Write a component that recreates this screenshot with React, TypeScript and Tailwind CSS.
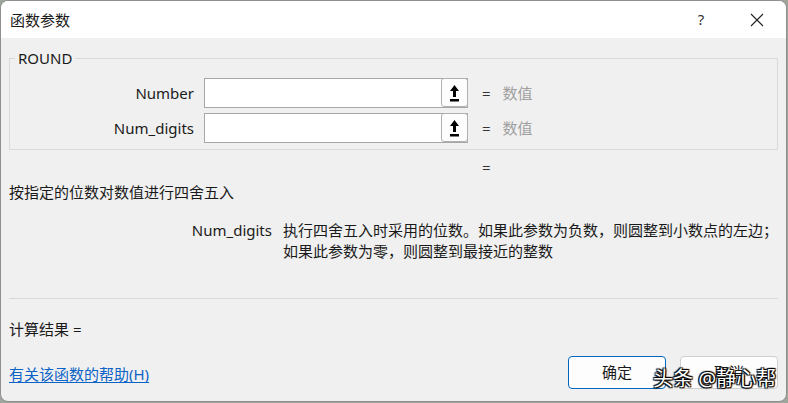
export default function App() {
  const font = { fontFamily: "'Noto Sans', 'Noto Sans CJK SC', sans-serif" };

  const UploadIcon = () => (
    <svg width="11" height="20" viewBox="0 0 11 20">
      <path d="M5.5 2 L10 8 L7 8 L7 14 L4 14 L4 8 L1 8 Z" fill="#000" />
      <rect x="1" y="16" width="9" height="2.5" fill="#000" />
    </svg>
  );

  const ParamRow = ({ label }: { label: string }) => (
    <div className="flex items-center h-[30px]">
      <div className="w-[184px] text-right text-[15px] text-[#1a1a1a]">{label}</div>
      <div className="ml-[10px] w-[264px] h-[30px] bg-white border border-[#a6a6a6] flex justify-end">
        <div className="w-[27px] h-[29px] -mt-px -mr-px rounded-[3px] border border-[#b0b0b0] bg-[#fdfdfd] flex items-center justify-center">
          <UploadIcon />
        </div>
      </div>
      <span className="ml-[14px] text-[15px] text-[#333]">=</span>
      <span className="ml-[12px] text-[15px] text-[#a0a0a0]">数值</span>
    </div>
  );

  return (
    <div className="w-[788px] h-[403px] bg-[#9ea59b] relative overflow-hidden" style={font}>
      <div className="absolute left-0 top-[50px] w-[2px] h-[135px] bg-[#c07a45]" />
      <div className="w-[787px] h-[402px] rounded-[8px] border border-[#8f8f8f] overflow-hidden flex flex-col bg-[#f0f0f0] relative">
        {/* Title bar */}
        <div className="h-[37px] bg-white flex items-center shrink-0">
          <div className="ml-[9px] text-[15px] text-[#1a1a1a] leading-[20px]">函数参数</div>
          <div className="ml-auto flex items-center">
            <div className="w-[46px] text-center text-[15px] text-[#333]">?</div>
            <div className="w-[46px] ml-[10px] mr-[6px] flex justify-center">
              <svg width="14" height="14" viewBox="0 0 14 14">
                <path d="M1 1 L13 13 M13 1 L1 13" stroke="#222" strokeWidth="1.1" />
              </svg>
            </div>
          </div>
        </div>

        {/* Body */}
        <div className="flex-1 px-[8px] flex flex-col">
          <fieldset className="mt-[10px] w-[769px] border border-[#d9d9d9] px-0 pb-[6px]">
            <legend className="ml-[5px] px-[3px] text-[15px] leading-[20px] text-[#1a1a1a]">ROUND</legend>
            <div className="mt-[10px] flex flex-col gap-[5px]">
              <ParamRow label="Number" />
              <ParamRow label="Num_digits" />
            </div>
          </fieldset>

          <div className="mt-[7px] h-[20px] leading-[20px] pl-[473px] text-[15px] text-[#333]">=</div>

          <div className="mt-[5px] h-[20px] leading-[20px] text-[15px] text-[#1a1a1a]">
            按指定的位数对数值进行四舍五入
          </div>

          <div className="mt-[18px] flex text-[15px] leading-[21px] text-[#1a1a1a] whitespace-nowrap">
            <div className="w-[264px] text-right">Num_digits</div>
            <div className="ml-[11px]">
              执行四舍五入时采用的位数。如果此参数为负数，则圆整到小数点的左边；
              <br />
              如果此参数为零，则圆整到最接近的整数
            </div>
          </div>

          <div className="mt-[36px] w-[769px] h-px bg-[#d9d9d9]" />

          <div className="mt-[20px] h-[20px] leading-[20px] text-[15px] text-[#1a1a1a]">计算结果 =</div>

          <div className="mt-[17px] flex items-start w-[769px]">
            <a className="mt-[8px] text-[15px] leading-[20px] text-[#0b63c5] underline underline-offset-2">
              有关该函数的帮助(H)
            </a>
            <button className="ml-auto w-[98px] h-[33px] rounded-[4px] border border-[#0067c0] bg-[#fdfdfd] text-[15px] text-[#1a1a1a]">
              确定
            </button>
            <button className="ml-[14px] w-[98px] h-[33px] rounded-[4px] border border-[#d0d0d0] bg-[#fdfdfd] text-[15px] text-[#1a1a1a]">
              取消
            </button>
          </div>
        </div>

        {/* watermark */}
        <div className="absolute left-[652px] top-[365px] whitespace-nowrap text-[20px] leading-[26px] text-white [text-shadow:0_0_1px_#000,1px_1px_1px_#000,-1px_-1px_1px_#000,1px_-1px_1px_#000,-1px_1px_1px_#000]">
          头条 @静心帮
        </div>
      </div>
    </div>
  );
}
